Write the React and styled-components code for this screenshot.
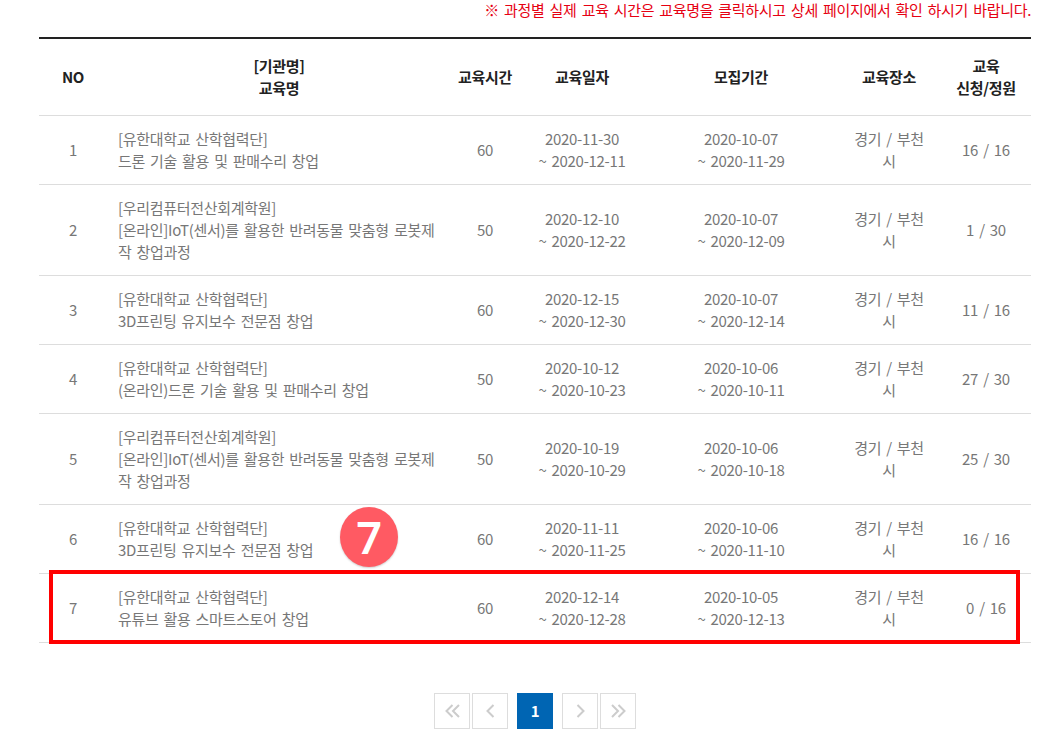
import React from 'react';
import styled, { createGlobalStyle } from 'styled-components';

const GlobalStyle = createGlobalStyle`
  body {
    margin: 0;
    background: #fff;
    font-family: 'Noto Sans CJK KR', 'Noto Sans', sans-serif;
    letter-spacing: -0.3px;
    word-spacing: 2px;
  }
`;

const Page = styled.div`
  width: 992px;
  margin-left: 39px;
  position: relative;
`;

const Notice = styled.p`
  margin: 0 0 17px;
  height: 20px;
  line-height: 20px;
  font-size: 15px;
  color: #e60012;
  text-align: right;
  white-space: nowrap;
`;

const Table = styled.table`
  width: 992px;
  table-layout: fixed;
  border-collapse: separate;
  border-spacing: 0;
  border-top: 2px solid #222;
`;

const Head = styled.th`
  padding: 16px 0;
  font-size: 15px;
  font-weight: 700;
  line-height: 22px;
  color: #222;
  text-align: center;
  border-bottom: 1px solid #ddd;
`;

const Cell = styled.td`
  padding: 12px ${(p) => p.$pad || 0}px;
  font-size: 15px;
  line-height: 22px;
  color: #777;
  text-align: center;
  word-break: break-all;
  border-bottom: 1px solid #ddd;
`;

const Title = styled.td`
  padding: 12px 11px;
  font-size: 15px;
  line-height: 22px;
  color: #777;
  word-break: break-all;
  border-bottom: 1px solid #ddd;
`;

const Highlight = styled.div`
  position: absolute;
  left: 10px;
  top: 570px;
  width: 971px;
  height: 74px;
  box-sizing: border-box;
  border: 4px solid #f00;
  pointer-events: none;
`;

const Badge = styled.div`
  position: absolute;
  left: 301px;
  top: 507px;
  width: 58px;
  height: 60px;
  border-radius: 50%;
  background: #ff5a63;
  color: #fff;
  font-family: 'Noto Sans', sans-serif;
  font-size: 45px;
  font-weight: 600;
  line-height: 60px;
  text-align: center;
  box-shadow: 0 1px 2px rgba(0, 0, 0, 0.2);
`;

const Pager = styled.nav`
  display: flex;
  justify-content: center;
  margin: 50px 0 6px;
`;

const PageButton = styled.a`
  width: 36px;
  height: 36px;
  box-sizing: border-box;
  display: flex;
  align-items: center;
  justify-content: center;
  margin: ${(p) => p.$margin || '0'};
  padding-bottom: ${(p) => (p.$active ? '2px' : '0')};
  border: ${(p) => (p.$active ? 'none' : '1px solid #ddd')};
  background: ${(p) => (p.$active ? '#0065b3' : '#fff')};
  color: #fff;
  font-size: 15px;
  font-weight: 700;
`;

const Chevrons = ({ double, flip }) => (
  <svg width="15" height="14" viewBox="0 0 15 14" fill="none" stroke="#ccc" strokeWidth="2"
    style={flip ? { transform: 'scaleX(-1)' } : undefined}>
    {double ? (
      <>
        <path d="M7.5 1 1.5 7 7.5 13" />
        <path d="M14 1 8 7 14 13" />
      </>
    ) : (
      <path d="M10.5 1 4.5 7 10.5 13" />
    )}
  </svg>
);

const rows = [
  [1, '[유한대학교 산학협력단]', '드론 기술 활용 및 판매수리 창업', 60, '2020-11-30', '2020-12-11', '2020-10-07', '2020-11-29', '16 / 16'],
  [2, '[우리컴퓨터전산회계학원]', '[온라인]IoT(센서)를 활용한 반려동물 맞춤형 로봇제작 창업과정', 50, '2020-12-10', '2020-12-22', '2020-10-07', '2020-12-09', '1 / 30'],
  [3, '[유한대학교 산학협력단]', '3D프린팅 유지보수 전문점 창업', 60, '2020-12-15', '2020-12-30', '2020-10-07', '2020-12-14', '11 / 16'],
  [4, '[유한대학교 산학협력단]', '(온라인)드론 기술 활용 및 판매수리 창업', 50, '2020-10-12', '2020-10-23', '2020-10-06', '2020-10-11', '27 / 30'],
  [5, '[우리컴퓨터전산회계학원]', '[온라인]IoT(센서)를 활용한 반려동물 맞춤형 로봇제작 창업과정', 50, '2020-10-19', '2020-10-29', '2020-10-06', '2020-10-18', '25 / 30'],
  [6, '[유한대학교 산학협력단]', '3D프린팅 유지보수 전문점 창업', 60, '2020-11-11', '2020-11-25', '2020-10-06', '2020-11-10', '16 / 16'],
  [7, '[유한대학교 산학협력단]', '유튜브 활용 스마트스토어 창업', 60, '2020-12-14', '2020-12-28', '2020-10-05', '2020-12-13', '0 / 16'],
];

export default function App() {
  return (
    <Page>
      <GlobalStyle />
      <Notice>※ 과정별 실제 교육 시간은 교육명을 클릭하시고 상세 페이지에서 확인 하시기 바랍니다.</Notice>
      <Table>
        <colgroup>
          <col width="68" />
          <col width="344" />
          <col width="68" />
          <col width="126" />
          <col width="192" />
          <col width="104" />
          <col width="90" />
        </colgroup>
        <thead>
          <tr>
            <Head>NO</Head>
            <Head>[기관명]<br />교육명</Head>
            <Head>교육시간</Head>
            <Head>교육일자</Head>
            <Head>모집기간</Head>
            <Head>교육장소</Head>
            <Head>교육<br />신청/정원</Head>
          </tr>
        </thead>
        <tbody>
          {rows.map((r) => (
            <tr key={r[0]}>
              <Cell>{r[0]}</Cell>
              <Title>{r[1]}<br />{r[2]}</Title>
              <Cell>{r[3]}</Cell>
              <Cell>{r[4]}<br />~ {r[5]}</Cell>
              <Cell>{r[6]}<br />~ {r[7]}</Cell>
              <Cell $pad={15}>경기 / 부천시</Cell>
              <Cell>{r[8]}</Cell>
            </tr>
          ))}
        </tbody>
      </Table>
      <Badge>7</Badge>
      <Highlight />
      <Pager>
        <PageButton><Chevrons double /></PageButton>
        <PageButton $margin="0 0 0 2px"><Chevrons /></PageButton>
        <PageButton $active $margin="0 0 0 9px">1</PageButton>
        <PageButton $margin="0 0 0 9px"><Chevrons flip /></PageButton>
        <PageButton $margin="0 0 0 2px"><Chevrons double flip /></PageButton>
      </Pager>
    </Page>
  );
}
